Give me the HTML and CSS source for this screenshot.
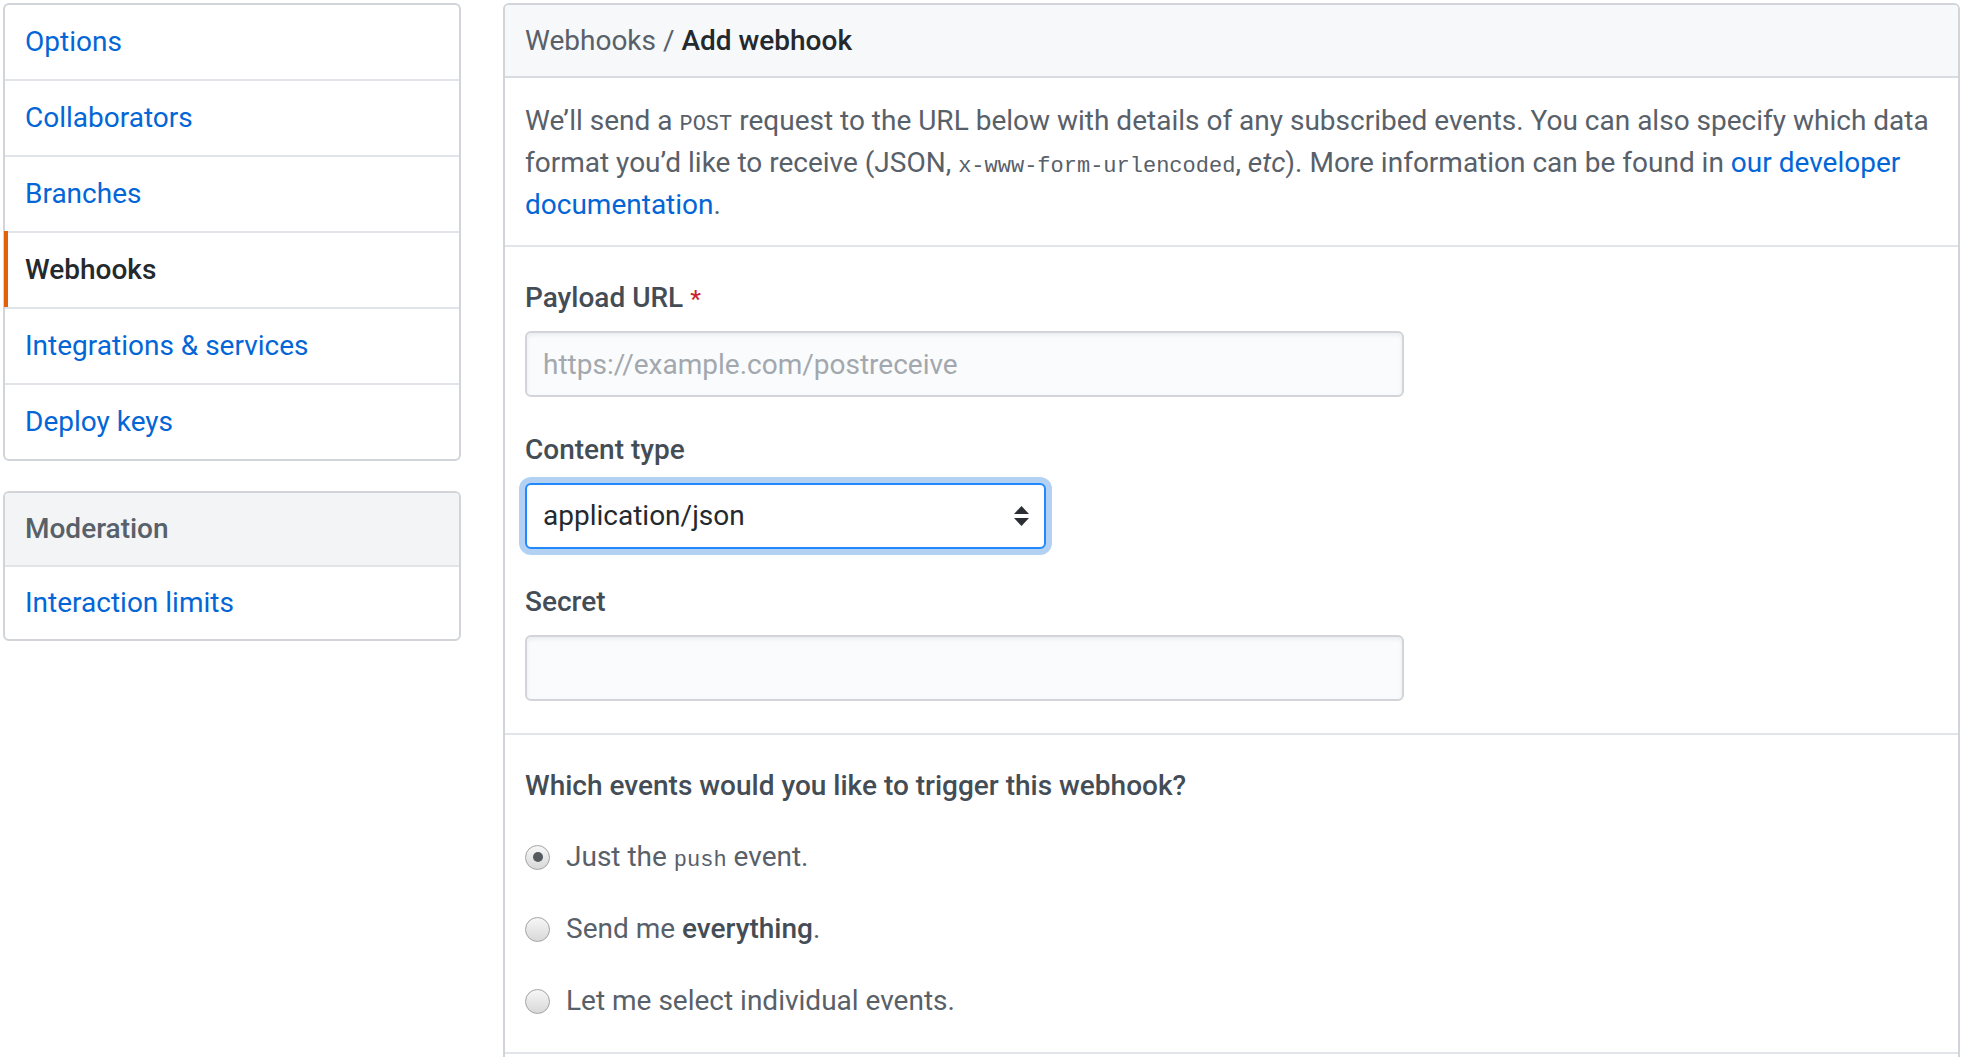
FILE: index.html
```html
<!DOCTYPE html>
<html lang="en">
<head>
<meta charset="utf-8">
<title>Add webhook</title>
<link rel="stylesheet" href="styles.css">
</head>
<body>
<div class="page">
  <nav class="sidebar">
    <div class="menu">
      <a class="menu-item" href="#">Options</a>
      <a class="menu-item" href="#">Collaborators</a>
      <a class="menu-item" href="#">Branches</a>
      <a class="menu-item selected" href="#">Webhooks</a>
      <a class="menu-item" href="#">Integrations &amp; services</a>
      <a class="menu-item" href="#">Deploy keys</a>
    </div>
    <div class="menu menu-mod">
      <div class="menu-heading">Moderation</div>
      <a class="menu-item" href="#">Interaction limits</a>
    </div>
  </nav>
  <main class="panel">
    <div class="panel-header"><span class="crumb">Webhooks</span> / <strong>Add webhook</strong></div>
    <div class="intro">
      <p>We’ll send a <code>POST</code> request to the URL below with details of any subscribed events. You can also specify which data format you’d like to receive (JSON, <code>x-www-form-urlencoded</code>, <em>etc</em>). More information can be found in <a href="#">our developer documentation</a>.</p>
    </div>
    <div class="form">
      <div class="form-group">
        <div class="form-label">Payload URL <span class="req">*</span></div>
        <input class="form-control" type="text" placeholder="https://example.com/postreceive">
      </div>
      <div class="form-group">
        <div class="form-label">Content type</div>
        <div class="select">
          <span>application/json</span>
          <svg class="select-arrow" width="15" height="20" viewBox="0 0 15 20"><polygon points="7.5,0 15,8 0,8" fill="#2b2f33"/><polygon points="0,12 15,12 7.5,20" fill="#2b2f33"/></svg>
        </div>
      </div>
      <div class="form-group">
        <div class="form-label">Secret</div>
        <input class="form-control" type="text">
      </div>
    </div>
    <div class="events">
      <h3 class="events-title">Which events would you like to trigger this webhook?</h3>
      <div class="radio-list">
        <div class="radio-row"><span class="radio checked"></span><span>Just the <code>push</code> event.</span></div>
        <div class="radio-row"><span class="radio"></span><span>Send me <b>everything</b>.</span></div>
        <div class="radio-row"><span class="radio"></span><span>Let me select individual events.</span></div>
      </div>
    </div>
    <div class="more"></div>
  </main>
</div>
</body>
</html>
```

FILE: styles.css
```css
html, body {
  margin: 0;
  padding: 0;
  overflow: hidden;
  background: #ffffff;
}

body {
  font-family: Roboto, "Liberation Sans", sans-serif;
  font-size: 28px;
  line-height: 42px;
  color: #24292e;
}

.page {
  display: flex;
  align-items: flex-start;
  gap: 42px;
  padding: 3px 2px 0 3px;
}

/* Sidebar */
.sidebar {
  width: 458px;
  flex: none;
  display: flex;
  flex-direction: column;
  gap: 30px;
}

.menu {
  display: flex;
  flex-direction: column;
  border: 2px solid #d1d5da;
  border-radius: 6px;
}

.menu-item {
  position: relative;
  display: block;
  padding: 16px 20px;
  color: #0366d6;
  text-decoration: none;
  border-top: 2px solid #e1e4e8;
}

.menu-item:first-child {
  border-top: 0;
}

.menu-item.selected {
  color: #24292e;
  font-weight: 500;
}

.menu-item.selected::before {
  content: "";
  position: absolute;
  left: -1px;
  top: -2px;
  bottom: 0;
  width: 4px;
  background: #e36209;
}

.menu-heading {
  padding: 15px 20px;
  background: #f3f4f6;
  color: #586069;
  font-weight: 500;
  border-radius: 4px 4px 0 0;
}

.menu-mod .menu-item {
  padding: 15px 20px;
}

/* Main panel */
.panel {
  flex: 1;
  min-width: 0;
  border: 2px solid #d1d5da;
  border-radius: 6px 6px 0 0;
}

.panel-header {
  background: #f6f8fa;
  padding: 15px 20px 14px;
  color: #586069;
  border-bottom: 2px solid #d8dce1;
  border-radius: 4px 4px 0 0;
}

.panel-header strong {
  color: #24292e;
  font-weight: 500;
}

.intro {
  padding: 22px 20px 19px;
  color: #586069;
  border-bottom: 2px solid #e1e4e8;
}

.intro p {
  margin: 0;
}

.intro a {
  color: #0366d6;
  text-decoration: none;
}

code {
  font-family: "Liberation Mono", "DejaVu Sans Mono", monospace;
  font-size: 22px;
  line-height: 1;
}

.form {
  display: flex;
  flex-direction: column;
  gap: 32px;
  padding: 30px 20px 32px;
  border-bottom: 2px solid #e1e4e8;
}

.form-group {
  display: flex;
  flex-direction: column;
  align-items: flex-start;
  gap: 12px;
}

.form-label {
  font-weight: 500;
  color: #444d56;
}

.req {
  color: #cb2431;
  font-size: 24px;
  line-height: 1;
}

.form-control {
  width: 879px;
  height: 66px;
  box-sizing: border-box;
  margin: 0;
  padding: 0 16px;
  border: 2px solid #d1d5da;
  border-radius: 6px;
  background: #fafbfc;
  box-shadow: inset 0 2px 4px rgba(27, 31, 35, 0.075);
  font-family: inherit;
  font-size: 28px;
  color: #24292e;
  outline: none;
}

.form-control::placeholder {
  color: #a2a8ae;
}

.select {
  width: 521px;
  height: 66px;
  box-sizing: border-box;
  display: flex;
  align-items: center;
  justify-content: space-between;
  padding: 0 15px 0 16px;
  border: 2px solid #2188ff;
  border-radius: 6px;
  background: #ffffff;
  box-shadow: 0 0 0 6px rgba(3, 102, 214, 0.3);
  color: #24292e;
}

.select-arrow {
  display: block;
  flex: none;
}

/* Events */
.events {
  padding: 30px 20px 30px;
  border-bottom: 2px solid #e1e4e8;
}

.events-title {
  margin: 0 0 29px;
  font-size: 28px;
  line-height: 42px;
  font-weight: 500;
  color: #444d56;
}

.radio-list {
  display: flex;
  flex-direction: column;
  gap: 30px;
}

.radio-row {
  display: flex;
  align-items: center;
  gap: 16px;
  height: 42px;
  color: #586069;
}

.radio-row b {
  font-weight: 500;
  color: #444d56;
}

.radio {
  position: relative;
  flex: none;
  width: 25px;
  height: 25px;
  box-sizing: border-box;
  border: 1px solid #a3a3a3;
  border-radius: 50%;
  background: linear-gradient(#f7f7f7, #d8d8d8);
}

.radio.checked::after {
  content: "";
  position: absolute;
  left: 6.5px;
  top: 6.5px;
  width: 10px;
  height: 10px;
  border-radius: 50%;
  background: #555a5f;
}

.more {
  height: 200px;
}
```
